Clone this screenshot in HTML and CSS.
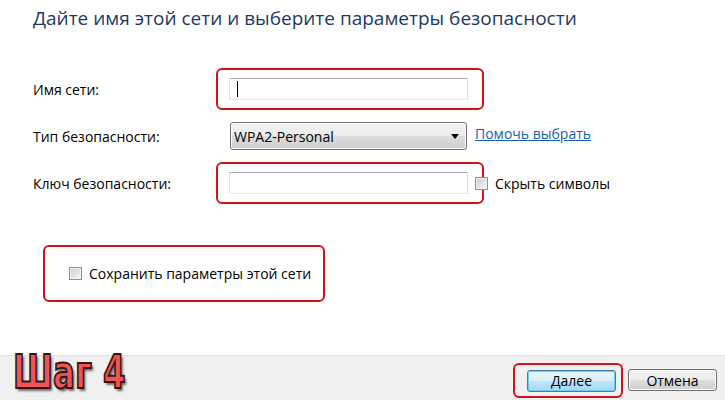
FILE: index.html
```html
<!DOCTYPE html>
<html lang="ru">
<head>
  <meta charset="UTF-8">
  <meta name="viewport" content="width=device-width, initial-scale=1.0">
  <title>Настройка сети</title>
  <link rel="stylesheet" href="styles.css">
</head>
<body>

  <main class="content">
    <h1 class="title">Дайте имя этой сети и выберите параметры безопасности</h1>

    <form class="net-form">
      <div class="row">
        <label class="label">Имя сети:</label>
        <div class="mark">
          <div class="field"><span class="caret"></span></div>
        </div>
      </div>

      <div class="row row-select">
        <label class="label" for="security">Тип безопасности:</label>
        <div class="select-wrap">
          <select id="security" class="select">
            <option>WPA2-Personal</option>
          </select>
        </div>
        <a class="link" href="#">Помочь выбрать</a>
      </div>

      <div class="row">
        <label class="label" for="key">Ключ безопасности:</label>
        <div class="mark">
          <input id="key" class="field" type="text">
        </div>
        <label class="check check-hide"><input type="checkbox">Скрыть символы</label>
      </div>

      <div class="mark mark-save">
        <label class="check"><input type="checkbox">Сохранить параметры этой сети</label>
      </div>
    </form>
  </main>

  <footer class="footer">
    <span class="step">Шаг 4</span>
    <div class="buttons">
      <div class="mark mark-btn">
        <button type="button" class="btn btn-default">Далее</button>
      </div>
      <button type="button" class="btn">Отмена</button>
    </div>
  </footer>

</body>
</html>
```

FILE: styles.css
```css
/* Reset styling */
* {
  margin: 0;
  padding: 0;
  box-sizing: border-box;
}

body {
  font-family: "Open Sans", "Noto Sans", sans-serif;
  background: #fff;
  color: #000;
  width: 725px;
  height: 400px;
  display: flex;
  flex-direction: column;
  overflow: hidden;
}

.content {
  flex: 1;
  padding: 5px 0 0 33px;
}

.title {
  font-size: 19px;
  font-weight: 400;
  line-height: 26px;
  color: #1d3868;
}

.net-form {
  margin-top: 37px;
  display: flex;
  flex-direction: column;
}

.row {
  display: flex;
  align-items: center;
}

.row-select {
  height: 52px;
}

.label {
  width: 183px;
  font-size: 14px;
}

/* Red annotation frame */
.mark {
  border: 2px solid #d3121c;
  border-radius: 6px;
  padding: 8px 14px 8px 11px;
}

.field {
  display: flex;
  align-items: center;
  width: 239px;
  height: 22px;
  border: 1px solid;
  border-color: #abadb3 #dbdfe6 #e3e9ef #e2e3ea;
  background: #fff;
  padding-left: 7px;
  font: inherit;
  outline: none;
}

.caret {
  width: 1px;
  height: 16px;
  background: #000;
}

.select-wrap {
  position: relative;
  margin-left: 14px;
}

.select {
  appearance: none;
  width: 237px;
  height: 28px;
  border: 1px solid #707070;
  border-radius: 3px;
  background: linear-gradient(#f2f2f2 0%, #ebebeb 50%, #dddddd 51%, #cfcfcf 100%);
  box-shadow: inset 0 0 0 1px #fbfbfb;
  font-family: inherit;
  font-size: 14px;
  color: #000;
  padding-left: 3px;
}

/* Dropdown arrow */
.select-wrap::after {
  content: "";
  position: absolute;
  right: 8px;
  top: 12px;
  border-left: 4px solid transparent;
  border-right: 4px solid transparent;
  border-top: 5px solid #000;
  pointer-events: none;
}

.link {
  margin-left: 8px;
  margin-top: -6px;
  font-size: 14px;
  color: #1560b6;
  text-decoration: underline;
}

.check {
  display: flex;
  align-items: center;
  gap: 7px;
  font-size: 14px;
}

.check input {
  appearance: none;
  width: 13px;
  height: 13px;
  border: 1px solid #8e8f8f;
  background: linear-gradient(135deg, #c9cdd3, #f7f7f7);
  box-shadow: inset 0 0 0 1px #f4f4f4;
}

.check-hide {
  margin-left: -9px;
}

.mark-save {
  align-self: flex-start;
  margin: 41px 0 0 10px;
  height: 57px;
  display: flex;
  align-items: center;
  padding: 0 12px 0 24px;
}

.footer {
  height: 45px;
  background: #f0f0f0;
  border-top: 1px solid #dfdfdf;
  display: flex;
  justify-content: space-between;
  align-items: flex-start;
  padding: 0 8px 0 13px;
}

.step {
  display: inline-block;
  margin-top: -7px;
  font-family: "DejaVu Sans Condensed", "DejaVu Sans", sans-serif;
  font-weight: bold;
  font-size: 36px;
  line-height: 36px;
  color: #ee5656;
  -webkit-text-stroke: 1.5px #3a1414;
  text-shadow: 2px 2px 2px rgba(0, 0, 0, 0.55);
  transform: scaleY(1.3);
  transform-origin: top left;
}

.buttons {
  display: flex;
  align-items: center;
  gap: 5px;
  margin-top: 7px;
}

.mark-btn {
  padding: 4px 5px 4px 12px;
}

.btn {
  width: 89px;
  height: 22px;
  border: 1px solid #707070;
  border-radius: 3px;
  background: linear-gradient(#f2f2f2 0%, #ebebeb 50%, #dddddd 51%, #cfcfcf 100%);
  box-shadow: inset 0 0 0 1px #fcfcfc;
  font-family: inherit;
  font-size: 14px;
  color: #000;
}

.btn-default {
  border-color: #3c7fb1;
  background: linear-gradient(#eaf6fd 0%, #d9f0fc 50%, #bee6fd 51%, #a7d9f5 100%);
  box-shadow: inset 0 0 0 1px #6fcbf0;
}
```
